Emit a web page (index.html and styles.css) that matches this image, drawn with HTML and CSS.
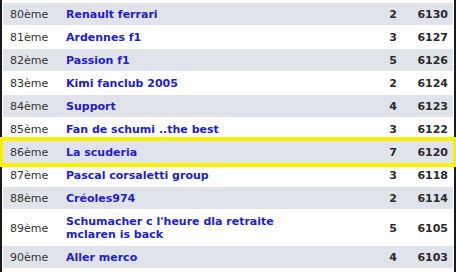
FILE: index.html
```html
<!DOCTYPE html>
<html lang="fr">
<head>
<meta charset="utf-8">
<title>Classement</title>
<link rel="stylesheet" href="styles.css">
</head>
<body>
<div class="board">
  <div class="row alt"><span class="rank">80ème</span><a class="name">Renault ferrari</a><span class="count">2</span><span class="score">6130</span></div>
  <div class="row"><span class="rank">81ème</span><a class="name">Ardennes f1</a><span class="count">3</span><span class="score">6127</span></div>
  <div class="row alt"><span class="rank">82ème</span><a class="name">Passion f1</a><span class="count">5</span><span class="score">6126</span></div>
  <div class="row"><span class="rank">83ème</span><a class="name">Kimi fanclub 2005</a><span class="count">2</span><span class="score">6124</span></div>
  <div class="row alt"><span class="rank">84ème</span><a class="name">Support</a><span class="count">4</span><span class="score">6123</span></div>
  <div class="row"><span class="rank">85ème</span><a class="name">Fan de schumi ..the best</a><span class="count">3</span><span class="score">6122</span></div>
  <div class="row alt current"><span class="rank">86ème</span><a class="name">La scuderia</a><span class="count">7</span><span class="score">6120</span></div>
  <div class="row"><span class="rank">87ème</span><a class="name">Pascal corsaletti group</a><span class="count">3</span><span class="score">6118</span></div>
  <div class="row alt"><span class="rank">88ème</span><a class="name">Créoles974</a><span class="count">2</span><span class="score">6114</span></div>
  <div class="row"><span class="rank">89ème</span><a class="name">Schumacher c l'heure dla retraite<br>mclaren is back</a><span class="count">5</span><span class="score">6105</span></div>
  <div class="row alt"><span class="rank">90ème</span><a class="name">Aller merco</a><span class="count">4</span><span class="score">6103</span></div>
</div>
</body>
</html>
```
FILE: styles.css
```css
html, body {
  margin: 0;
  padding: 0;
  background: #ffffff;
}
body {
  font-family: "DejaVu Sans", Verdana, sans-serif;
  font-size: 11px;
  line-height: 13px;
  color: #333333;
  overflow: hidden;
}
.board {
  width: 456px;
  height: 272px;
  box-sizing: border-box;
  border-left: 2px solid #1a1a1a;
  border-right: 2px solid #1a1a1a;
  padding: 3px 1px 0 1px;
  display: flex;
  flex-direction: column;
  gap: 1px;
}
.row {
  display: grid;
  grid-template-columns: 63px 1fr 40px 56px;
  align-items: center;
  min-height: 22px;
  padding-top: 1px;
  box-sizing: border-box;
  background: #ffffff;
}
.row.alt {
  background: #e1e3eb;
}
.row.current {
  position: relative;
  z-index: 1;
  outline: 4px solid #f7f200;
  outline-offset: 0;
}
.rank {
  padding-left: 7px;
}
.name {
  font-weight: bold;
  color: #2121c4;
  text-decoration: none;
  padding: 4px 0;
}
.count, .score {
  font-weight: bold;
  text-align: right;
  color: #2a2a2a;
}
.score {
  padding-right: 5px;
}
```
